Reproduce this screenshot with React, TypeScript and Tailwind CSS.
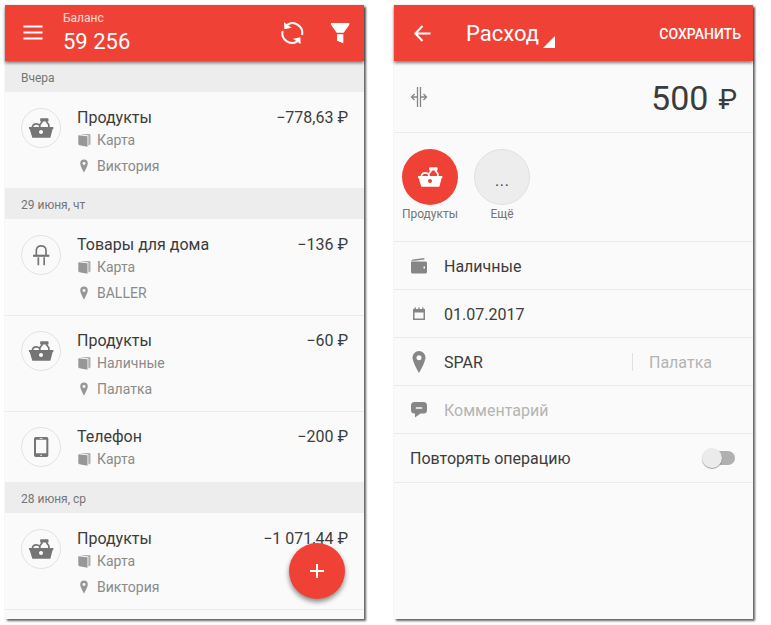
import type { ReactNode } from "react";

type IconProps = { className?: string };

function BasketIcon({ className }: IconProps) {
  return (
    <svg viewBox="84 345 78 78" className={className} aria-hidden="true">
      <path
        fill="currentColor"
        fillRule="evenodd"
        d="M87 381H160V387H158L151 413H97L89 387H87ZM123 390a6 6 0 1 0 .1 0Z"
      />
      <path
        fill="none"
        stroke="currentColor"
        strokeWidth="5"
        strokeLinejoin="round"
        d="M97 382C98 374 104 371.500 109 371.500C113 371.500 116 373 119 376M123 357H143V362H123ZM126 362V366L119.500 374V382M140 362V366L146.500 374V382"
      />
    </svg>
  );
}

function LampIcon({ className }: IconProps) {
  return (
    <svg viewBox="84 157 78 78" className={className} aria-hidden="true">
      <path
        fill="none"
        stroke="currentColor"
        strokeWidth="5"
        d="M109 196V182C109 164 138 164 138 182V196M115 203V227M132.500 203V227"
      />
      <path fill="currentColor" d="M99 195H148V201.500H99Z" />
    </svg>
  );
}

function PhoneIcon({ className }: IconProps) {
  return (
    <svg viewBox="84 75 78 78" className={className} aria-hidden="true">
      <path
        fill="currentColor"
        fillRule="evenodd"
        d="M107 84H140Q145 84 145 89V139Q145 144 140 144H107Q102 144 102 139V89Q102 84 107 84ZM108 92V133H139V92ZM119 87V89H128V87ZM121 137V140H126V137Z"
      />
    </svg>
  );
}

function CardIcon({ className }: IconProps) {
  return (
    <svg viewBox="0 0 14 14" className={className} aria-hidden="true">
      <path fill="currentColor" d="M1.300 2.200L10.500 3.200V13.700L2.500 12.200Q1.300 12 1.300 11Z" />
      <path fill="currentColor" d="M3 1H12.300Q13.500 1 13.500 2.300V11.500L11.300 12.500V2.600Z" opacity="0.75" />
    </svg>
  );
}

function PinIcon({ className }: IconProps) {
  return (
    <svg viewBox="0 0 14 24" className={className} aria-hidden="true">
      <path
        fill="currentColor"
        fillRule="evenodd"
        d="M7 1A6.500 6.500 0 0 0 .5 7.500C.5 12 7 23 7 23S13.500 12 13.500 7.500A6.500 6.500 0 0 0 7 1ZM7 5.200A2.500 2.500 0 1 1 7 10.200A2.500 2.500 0 1 1 7 5.200Z"
      />
    </svg>
  );
}

type Operation = {
  title: string;
  amount: string;
  account: string;
  place?: string;
  icon: (p: IconProps) => ReactNode;
};

const days: { label: string; items: Operation[] }[] = [
  {
    label: "Вчера",
    items: [{ title: "Продукты", amount: "−778,63 ₽", account: "Карта", place: "Виктория", icon: BasketIcon }],
  },
  {
    label: "29 июня, чт",
    items: [
      { title: "Товары для дома", amount: "−136 ₽", account: "Карта", place: "BALLER", icon: LampIcon },
      { title: "Продукты", amount: "−60 ₽", account: "Наличные", place: "Палатка", icon: BasketIcon },
      { title: "Телефон", amount: "−200 ₽", account: "Карта", icon: PhoneIcon },
    ],
  },
  {
    label: "28 июня, ср",
    items: [{ title: "Продукты", amount: "−1 071,44 ₽", account: "Карта", place: "Виктория", icon: BasketIcon }],
  },
];

function OperationRow({ op }: { op: Operation }) {
  const Icon = op.icon;
  return (
    <li className="-mb-px flex min-h-18 items-start border-b border-[#ebebeb] px-4 pt-4 pb-3">
      <span className="flex size-10 shrink-0 items-center justify-center rounded-full border border-[#e2e2e2] text-[#757575]">
        <Icon className="size-[26px]" />
      </span>
      <div className="ml-4 min-w-0 flex-1">
        <div className="mb-0.5 flex justify-between gap-2 text-base leading-5 text-[#3c3c3c]">
          <h3>{op.title}</h3>
          <span>{op.amount}</span>
        </div>
        <div className="flex flex-col gap-1.5 text-sm leading-5 text-[#8a8a8a]">
          <p className="flex items-center gap-1.5">
            <CardIcon className="size-3.5 text-[#979797]" />
            {op.account}
          </p>
          {op.place && (
            <p className="flex items-center gap-1.5">
              <PinIcon className="h-3.5 w-3.5 text-[#979797]" />
              {op.place}
            </p>
          )}
        </div>
      </div>
    </li>
  );
}

function Panel({ label, children }: { label: string; children: ReactNode }) {
  return (
    <section
      aria-label={label}
      className="relative min-w-0 flex-1 bg-[#fafafa] shadow-[2px_2px_2px_rgba(0,0,0,0.6),0_0_1px_rgba(0,0,0,0.2)]"
    >
      {children}
    </section>
  );
}

function TopBar({ children }: { children: ReactNode }) {
  return (
    <header className="relative z-10 flex h-14 items-center bg-[#f04136] px-4 text-white shadow-[0_2px_3px_rgba(0,0,0,0.5)]">
      {children}
    </header>
  );
}

function Feed() {
  return (
    <Panel label="Операции">
      <TopBar>
        <button type="button" aria-label="Меню" className="flex size-6 items-center justify-center">
          <svg viewBox="0 0 24 24" className="size-6" aria-hidden="true">
            <path d="M2.500 5.500H21.500M2.500 11.500H21.500M2.500 17.500H21.500" stroke="currentColor" strokeWidth="2" />
          </svg>
        </button>
        <div className="ml-[18px] flex-1 pt-0.5">
          <p className="text-xs leading-4 text-white/80">Баланс</p>
          <p className="text-[22px] leading-8">59 256</p>
        </div>
        <button type="button" aria-label="Обновить" className="mr-6">
          <svg viewBox="301 63 72 72" className="size-6" aria-hidden="true">
            <g fill="none" stroke="currentColor" strokeWidth="6">
              <path d="M322 75A29 29 0 0 1 367 105" />
              <path d="M309 93A29 29 0 0 0 353 124" />
            </g>
            <path fill="currentColor" d="M313 67L314 88L336 83ZM363 132L362 112L340 116Z" />
          </svg>
        </button>
        <button type="button" aria-label="Фильтр" className="-mr-1">
          <svg viewBox="445 63 72 72" className="size-6" aria-hidden="true">
            <path fill="currentColor" d="M454 69H509V74L492 98H471L454 74ZM472 103H491V130L472 122Z" />
          </svg>
        </button>
      </TopBar>
      {days.map((day) => (
        <div key={day.label}>
          <h2 className="relative flex h-[31px] items-center bg-[#ededed] px-4 pt-0.5 text-xs text-[#757575]">
            {day.label}
          </h2>
          <ul>
            {day.items.map((op, i) => (
              <OperationRow key={i} op={op} />
            ))}
          </ul>
        </div>
      ))}
      <button
        type="button"
        aria-label="Добавить операцию"
        className="absolute right-[19px] bottom-5 flex size-14 items-center justify-center rounded-full bg-[#f04136] text-white shadow-[0_3px_5px_rgba(0,0,0,0.45)]"
      >
        <svg viewBox="0 0 14 14" className="size-3.5" aria-hidden="true">
          <path d="M7 0V14M0 7H14" stroke="currentColor" strokeWidth="2" />
        </svg>
      </button>
    </Panel>
  );
}

function Field({ icon, label, id, children }: { icon: ReactNode; label: string; id: string; children: ReactNode }) {
  return (
    <div className="flex h-12 items-center border-b border-[#ebebeb] px-4 text-base text-[#3c3c3c]">
      <label htmlFor={id} aria-label={label} className="mr-[15px] -ml-px flex w-5 justify-center text-[#868686]">
        {icon}
      </label>
      {children}
    </div>
  );
}

function Editor() {
  return (
    <Panel label="Новая операция">
      <TopBar>
        <button type="button" aria-label="Назад">
          <svg viewBox="0 0 24 24" className="size-6" aria-hidden="true">
            <path d="M20.500 12.500H6M12.500 5L5.300 12.500L12.500 20" fill="none" stroke="currentColor" strokeWidth="2" />
          </svg>
        </button>
        <label className="ml-8 flex items-center pt-0.5">
          <select aria-label="Тип операции" className="appearance-none bg-transparent text-[22px] leading-8">
            <option>Расход</option>
          </select>
          <svg viewBox="0 0 12 12" className="mt-4 ml-1 size-3" aria-hidden="true">
            <path d="M12 0V12H0Z" fill="currentColor" />
          </svg>
        </label>
        <button type="button" className="-mr-1 ml-auto pt-0.5 text-sm font-medium">
          СОХРАНИТЬ
        </button>
      </TopBar>
      <form>
        <div className="flex h-18 items-center border-b border-[#ebebeb] px-4 text-[#3c3c3c]">
          <button type="button" aria-label="Разделить" className="text-[#868686]">
            <svg viewBox="0 0 18 22" className="h-[22px] w-[18px]" aria-hidden="true">
              <path
                d="M7.500 1V21M10.500 1V21M7 11H1.500M4.500 8L1.500 11L4.500 14M11 11H16.500M13.500 8L16.500 11L13.500 14"
                fill="none"
                stroke="currentColor"
                strokeWidth="1.300"
              />
            </svg>
          </button>
          <input
            aria-label="Сумма"
            defaultValue="500"
            className="min-w-0 flex-1 bg-transparent pt-0.5 text-right text-[34px] leading-10"
          />
          <span className="ml-2.5 pt-1.5 text-[28px] leading-8">₽</span>
        </div>
        <div className="flex h-[109px] gap-4 border-b border-[#ebebeb] px-2 pt-4 text-xs leading-[18px] text-[#757575]">
          <button type="button" className="flex w-14 flex-col items-center">
            <span className="flex size-14 items-center justify-center rounded-full bg-[#f04136] text-white">
              <BasketIcon className="size-[26px]" />
            </span>
            Продукты
          </button>
          <button type="button" className="flex w-14 flex-col items-center">
            <span className="flex size-14 items-center justify-center rounded-full border border-[#e0e0e0] bg-[#ededed] pt-1 text-xl font-light text-[#3c3c3c]">
              ...
            </span>
            Ещё
          </button>
        </div>
        <Field
          id="account"
          label="Счёт"
          icon={
            <svg viewBox="0 0 16 16" className="size-4" aria-hidden="true">
              <path
                fill="currentColor"
                fillRule="evenodd"
                d="M0 3.500H14.500Q16 3.500 16 5V14Q16 15.500 14.500 15.500H1.500Q0 15.500 0 14ZM12.500 8.500V10.500H14V8.500Z"
              />
              <path fill="currentColor" d="M.2 2.800Q.5 1.800 2 1.600L13.300 0V1.400L3.500 2.800Z" />
            </svg>
          }
        >
          <select id="account" className="flex-1 appearance-none bg-transparent pt-0.5">
            <option>Наличные</option>
          </select>
        </Field>
        <Field
          id="date"
          label="Дата"
          icon={
            <svg viewBox="0 0 14 14" className="size-3.5" aria-hidden="true">
              <path
                fill="currentColor"
                fillRule="evenodd"
                d="M1 2H2.500V.5H4V2H6.300V.5H7.700V2H10V.5H11.500V2H13V13H1ZM2.500 5.500V11.500H11.500V5.500Z"
              />
            </svg>
          }
        >
          <input id="date" defaultValue="01.07.2017" className="min-w-0 flex-1 bg-transparent pt-0.5" />
        </Field>
        <Field id="place" label="Место" icon={<PinIcon className="h-6 w-3.5" />}>
          <input id="place" defaultValue="SPAR" className="min-w-0 flex-1 bg-transparent pt-0.5" />
          <button
            type="button"
            className="mr-[25px] flex h-[18px] items-center border-l border-[#e0e0e0] pt-0.5 pl-4 text-[#b4b4b4]"
          >
            Палатка
          </button>
        </Field>
        <Field
          id="comment"
          label="Комментарий"
          icon={
            <svg viewBox="0 0 16 16" className="size-4" aria-hidden="true">
              <path
                fill="currentColor"
                fillRule="evenodd"
                d="M3.500 0H12.500Q16 0 16 3.500V8Q16 11.500 12.500 11.500H9.500L4 15.500V11.500H3.500Q0 11.500 0 8V3.500Q0 0 3.500 0ZM4.800 5.200V6.700H11.200V5.200Z"
              />
            </svg>
          }
        >
          <input
            id="comment"
            placeholder="Комментарий"
            className="min-w-0 flex-1 bg-transparent pt-0.5 placeholder:text-[#b4b4b4]"
          />
        </Field>
        <div className="flex h-[49px] items-center justify-between border-b border-[#ebebeb] px-4 text-base text-[#3c3c3c]">
          <label htmlFor="repeat" className="pt-0.5">
            Повторять операцию
          </label>
          <input
            id="repeat"
            type="checkbox"
            role="switch"
            className="relative mr-0.5 h-3.5 w-8 appearance-none rounded-full bg-[#b0b0b0] before:absolute before:-top-[3px] before:-left-px before:size-5 before:rounded-full before:bg-[#ebebeb] before:shadow-[0_1px_1px_rgba(0,0,0,0.35)] checked:bg-[#f7a09a] checked:before:left-3.5 checked:before:bg-[#f04136]"
          />
        </div>
      </form>
    </Panel>
  );
}

export default function App() {
  return (
    <main className="flex min-h-screen gap-[30px] bg-white pt-[5px] pr-[18px] pb-1.5 pl-[5px] font-[Roboto,'Noto_Sans',sans-serif]">
      <Feed />
      <Editor />
    </main>
  );
}
